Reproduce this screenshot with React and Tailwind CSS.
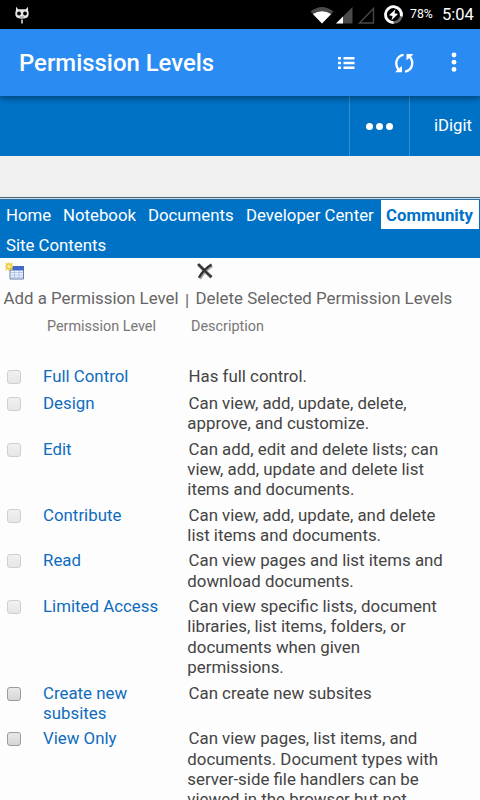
import clsx from 'clsx';

const navLinks = [
  { label: "Home", width: "w-[57px]" },
  { label: "Notebook", width: "w-[85px]" },
  { label: "Documents", width: "w-[98px]" },
  { label: "Developer Center", width: "w-[140px]" },
];

const levels = [
  { name: "Full Control", lines: ["Has full control."], locked: true },
  { name: "Design", lines: ["Can view, add, update, delete,", "approve, and customize."], locked: true },
  { name: "Edit", lines: ["Can add, edit and delete lists; can", "view, add, update and delete list", "items and documents."], locked: true },
  { name: "Contribute", lines: ["Can view, add, update, and delete", "list items and documents."], locked: true },
  { name: "Read", lines: ["Can view pages and list items and", "download documents."], locked: true },
  { name: "Limited Access", lines: ["Can view specific lists, document", "libraries, list items, folders, or", "documents when given", "permissions."], locked: true },
  { name: "Create new subsites", lines: ["Can create new subsites"] },
  { name: "View Only", lines: ["Can view pages, list items, and", "documents. Document types with", "server-side file handlers can be", "viewed in the browser but not"] },
];

function StatusBar() {
  return (
    <div className="flex h-[29px] shrink-0 items-center bg-black text-white">
      <svg className="ml-[14px] mt-[1px]" width="16" height="18" viewBox="0 0 16 18">
        <path d="M2.200.800l2 2.500h7.600l2-2.500.4 4.200c.8 2 .7 4-.3 5.800-1.500 1.500-3.300 1.900-5.900 1.900s-4.400-.4-5.900-1.900c-1-1.800-1.100-3.800-.3-5.800z" fill="#e6e6e6" />
        <circle cx="5" cy="7.500" r="1.900" fill="#000" />
        <circle cx="11" cy="7.500" r="1.900" fill="#000" />
        <path d="M6 11h4" stroke="#777" strokeWidth=".8" />
        <path d="M8 13.500v4" stroke="#ddd" strokeWidth="1.600" />
      </svg>
      <svg className="ml-auto mr-[6px]" width="94" height="22" viewBox="310 3 94 22">
        <path d="M310.500 10.500Q322 1.500 333.500 10.500L322 22.500z" fill="#4a4a4a" />
        <path d="M312.800 13Q322 7.500 331.200 13L322 22.500z" fill="#fff" />
        <path d="M352.500 6v16.500H336z" fill="#4a4a4a" />
        <path d="M343 15.500v7h-7z" fill="#fff" />
        <path d="M373.500 7.500V22h-14z" fill="none" stroke="#484848" strokeWidth="1.400" />
        <circle cx="393.500" cy="13.700" r="8" fill="none" stroke="#666" strokeWidth="2.800" />
        <path d="M393.500 21.700a8 8 0 1 1 7.800-6.300" fill="none" stroke="#fff" strokeWidth="2.800" />
        <path d="M395.500 8.300l-6.500 6 3.600.6-1.100 4.300 6.500-6.300-3.600-.6z" fill="#fff" />
      </svg>
      <span className="w-[32px] text-[12.300px]">78%</span>
      <span className="mt-[2px] w-[38px] text-[16.500px]">5:04</span>
    </div>
  );
}

function AppBar() {
  return (
    <header className="relative z-10 flex h-[67px] shrink-0 items-center bg-[#2a8bf2] text-white shadow-[0_2px_7px_rgba(0,0,0,0.45)]">
      <h1 className="ml-[19px] mt-[2px] text-[23.900px] font-medium">Permission Levels</h1>
      <svg className="ml-auto" width="142" height="30" viewBox="338 48 142 30">
        <g fill="#fff">
          <path d="M338 57h3v2.600h-3zM338 61.700h3v2.600h-3zM338 66.400h3V69h-3zM343.500 57h11v2.600h-11zM343.500 61.700h11v2.600h-11zM343.500 66.400h11V69h-11z" />
          <path d="M406.500 54h6.800l-2 2.600-4.800 3.600z" />
          <path d="M402 72.300h-6.800l2-2.600 4.800-3.600z" />
          <circle cx="454" cy="55" r="2.400" />
          <circle cx="454" cy="62.200" r="2.400" />
          <circle cx="454" cy="69.400" r="2.400" />
        </g>
        <path d="M403.500 54.800c-7.300 1.200-9.500 9.500-4.600 15.200M405 71.600c7.300-1.200 9.500-9.500 4.600-15.200" fill="none" stroke="#fff" strokeWidth="2.300" />
      </svg>
    </header>
  );
}

function SuiteBar() {
  return (
    <div className="flex h-[60px] shrink-0 items-center justify-end bg-[#0072c6] text-white">
      <div className="flex h-full w-[61px] items-center justify-center gap-[3px] border-x border-[#338ed1]">
        <span className="size-[7px] rounded-full bg-white" />
        <span className="size-[7px] rounded-full bg-white" />
        <span className="size-[7px] rounded-full bg-white" />
      </div>
      <span className="w-[70px] pl-[24px] text-[16.700px]">iDigit</span>
    </div>
  );
}

function SiteNav() {
  return (
    <nav className="h-[61px] shrink-0 border-t border-[#48647c] bg-[#0072c6] text-[16.800px] text-white">
      <div className="h-px bg-[#c8dcec]" />
      <div className="h-px bg-[#2a6f9f]" />
      <div className="flex h-[29px] whitespace-nowrap pl-[6px] leading-[31px]">
        {navLinks.map((link) => (
          <a key={link.label} className={clsx("shrink-0", link.width)}>{link.label}</a>
        ))}
        <a className="-ml-[5px] h-[29px] w-[98px] shrink-0 bg-white pl-[5px] font-bold text-[#0072c6]">Community</a>
      </div>
      <a className="block pl-[6px] leading-[33px]">Site Contents</a>
    </nav>
  );
}

function Toolbar() {
  return (
    <div className="flex h-[56px] shrink-0 whitespace-nowrap text-[16.850px] leading-5 text-[#666]">
      <a className="w-[182px] pl-[3.500px]">
        <svg className="mt-[4px]" width="21" height="18" viewBox="0 0 21 18">
          <path d="M6 4.500h13.500v12.500H6z" fill="#eef4ff" stroke="#667faa" />
          <path d="M6 4h14v4.500H6z" fill="#4268c8" />
          <path d="M7 10.500h12M7 13h12M7 15.300h12M10.500 9v8M15 9v8" stroke="#a9bcdd" strokeWidth=".8" />
          <path d="M1.300.500l2.700 1L5 .3l1.500 1.400L9 .5 8.200 3l1 1.500-1 1.700.6 2.400-2.500-1L5 9 3.800 7.600l-2.600.9.9-2.600L1 4.500 2.100 3z" fill="#efcd4c" />
          <circle cx="5" cy="4.500" r="1.600" fill="#fff2a5" />
        </svg>
        <span className="mt-[8px] block">Add a Permission Level</span>
      </a>
      <span className="w-[13.500px] pl-[3px] pt-[32px]">|</span>
      <a>
        <svg className="mt-[4px]" width="18" height="18" viewBox="0 0 18 18">
          <path d="M2.500 2.500c4 4 8 8 13 13M16 3.500C11 6.500 7 10.500 3.500 16.500" fill="none" stroke="#a2a2a2" strokeWidth="3.600" />
          <path d="M2 2c4 4 8 8.500 13.500 13M15.500 2.500C10 6 6 10 3 15.500" fill="none" stroke="#333" strokeWidth="2.300" />
        </svg>
        <span className="mt-[8px] block">Delete Selected Permission Levels</span>
      </a>
    </div>
  );
}

function Checkbox({ locked }) {
  return (
    <span
      className={clsx(
        "block size-[14px] rounded-[3px] border bg-gradient-to-b",
        locked ? "border-[#cfcfcf] from-[#f1f1f1] to-[#e6e6e6]" : "border-[#9b9b9b] from-[#e9e9e9] to-[#d6d6d6]"
      )}
    />
  );
}

function LevelRow({ level, first }) {
  return (
    <div className={clsx("flex text-[16.850px] leading-[20.400px]", first ? "mb-[6.400px]" : "mb-[4.900px]")}>
      <div className="w-[43px] pl-[7px] pt-[4px]">
        <Checkbox locked={level.locked} />
      </div>
      <a className="w-[144px] pr-[25px] text-[#0f6cbd]">{level.name}</a>
      <div className="whitespace-nowrap text-[#444]">
        {level.lines.map((line, i) => (
          <div key={line} className={i === 0 ? "pl-[1.500px]" : "pl-[0.300px]"}>{line}</div>
        ))}
      </div>
    </div>
  );
}

export default function App() {
  return (
    <div className="flex h-[800px] w-[480px] flex-col overflow-hidden bg-[#fdfdfd] font-['Roboto',sans-serif]">
      <StatusBar />
      <AppBar />
      <SuiteBar />
      <div className="h-[41px] shrink-0 bg-[#f0f0f0]" />
      <SiteNav />
      <Toolbar />

      {/* Column headings */}
      <div className="flex h-[52px] shrink-0 pt-[3px] text-[14.400px] leading-5 text-[#777]">
        <span className="w-[191px] pl-[47px]">Permission Level</span>
        <span>Description</span>
      </div>

      <div>
        {levels.map((level, i) => (
          <LevelRow key={level.name} level={level} first={i === 0} />
        ))}
      </div>
    </div>
  );
}
